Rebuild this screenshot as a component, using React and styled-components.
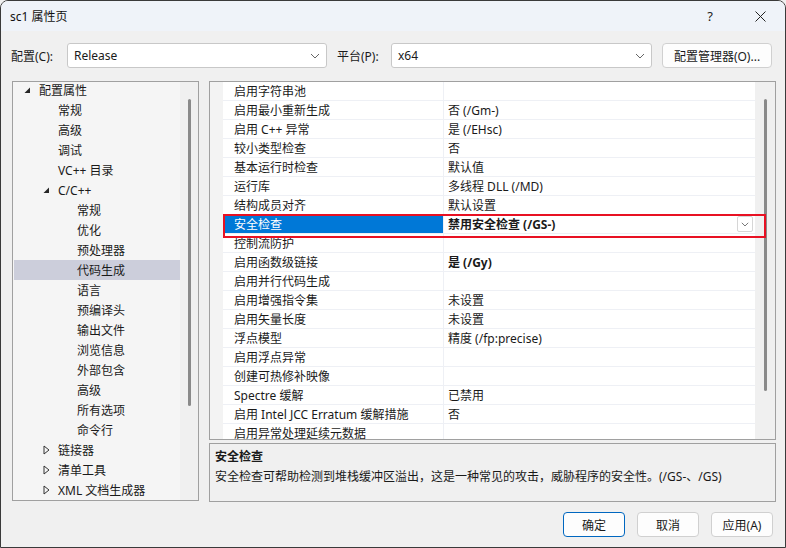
import React from "react";
import styled, { createGlobalStyle } from "styled-components";

const GlobalStyle = createGlobalStyle`
  html, body { margin: 0; padding: 0; background: #f0f0f0; }
  body {
    font-family: "Noto Sans", "Noto Sans CJK SC", sans-serif;
    font-size: 12px;
    color: #1a1a1a;
  }
  * { box-sizing: border-box; }
`;

const FONT = `"Noto Sans", "Noto Sans CJK SC", sans-serif`;

const Window = styled.div`
  width: 786px;
  height: 548px;
  display: flex;
  flex-direction: column;
  background: #f0f0f0;
  border: 1px solid #3a3a3a;
  border-radius: 8px 8px 0 0;
  overflow: hidden;
  font-family: ${FONT};
  font-size: 12px;
`;

const TitleBar = styled.div`
  height: 30px;
  flex: none;
  display: flex;
  align-items: center;
  background: #eff3f9;
  padding-left: 9px;
  font-size: 12px;
  color: #111;
`;

const Title = styled.div`
  flex: 1;
`;

const TitleButton = styled.div`
  width: 50px;
  height: 30px;
  display: flex;
  align-items: center;
  justify-content: center;
  color: #222;
  font-size: 13px;
`;

const TopRow = styled.div`
  display: flex;
  align-items: center;
  height: 27px;
  margin-top: 11px;
  padding-left: 10px;
`;

const Label = styled.span`
  width: ${(p) => p.w}px;
  flex: none;
  font-size: 12px;
`;

const Combo = styled.div`
  width: ${(p) => p.w}px;
  height: 25px;
  flex: none;
  display: flex;
  align-items: center;
  background: #fff;
  border: 1px solid #c8c8c8;
  border-radius: 3px;
  padding: 0 6px 0 6px;
  margin-right: 10px;
  font-size: 12px;
`;

const ComboText = styled.span`
  flex: 1;
`;

const Chevron = ({ size = 10, color = "#666" }) => (
  <svg width={size} height={size * 0.6} viewBox="0 0 10 6">
    <path d="M1 1 L5 5 L9 1" fill="none" stroke={color} strokeWidth="1" />
  </svg>
);

const Button = styled.div`
  width: ${(p) => p.w || 62}px;
  height: 25px;
  flex: none;
  display: flex;
  align-items: center;
  justify-content: center;
  background: #fdfdfd;
  border: 1px solid ${(p) => (p.primary ? "#0067c0" : "#d0d0d0")};
  border-radius: 4px;
  font-size: 12px;
  color: #1a1a1a;
`;

const Main = styled.div`
  display: flex;
  margin-top: 12px;
  padding-left: 11px;
  gap: 10px;
`;

const TreePanel = styled.div`
  width: 187px;
  height: 420px;
  border: 1px solid #a0a0a0;
  background: #f5f5f5;
  display: flex;
  position: relative;
`;

const TreeList = styled.div`
  flex: 1;
  padding-left: 1px;
  margin-top: -2px;
`;

const TreeRow = styled.div`
  height: 20px;
  display: flex;
  align-items: center;
  padding-left: ${(p) => 6 + p.level * 19}px;
  background: ${(p) => (p.selected ? "#cccedb" : "transparent")};
  font-size: 12px;
  color: #1a1a1a;
  white-space: nowrap;
`;

const Expander = styled.span`
  width: 19px;
  flex: none;
  display: flex;
  align-items: center;
  padding-left: 4px;
`;

const VScroll = styled.div`
  width: 18px;
  flex: none;
  display: flex;
  justify-content: center;
  padding-top: ${(p) => p.top}px;
  background: #f0f0f0;
`;

const Thumb = styled.div`
  width: 3px;
  height: ${(p) => p.h}px;
  background: #8a8a8a;
  border-radius: 2px;
`;

const RightCol = styled.div`
  display: flex;
  flex-direction: column;
  gap: 3px;
`;

const GridPanel = styled.div`
  width: 567px;
  height: 359px;
  border: 1px solid #a0a0a0;
  display: flex;
  overflow: hidden;
  position: relative;
`;

const Gutter = styled.div`
  width: 13px;
  flex: none;
  background: #f3f3f3;
`;

const Grid = styled.div`
  flex: 1;
  background: #fff;
  overflow: hidden;
`;

const GridRow = styled.div`
  height: 19px;
  display: flex;
  border-bottom: 1px solid #eef0f5;
  font-size: 12px;
`;

const NameCell = styled.div`
  width: 221px;
  flex: none;
  display: flex;
  align-items: center;
  padding-left: 11px;
  border-right: 1px solid #eef0f5;
  background: ${(p) => (p.selected ? "#0078d7" : "#fff")};
  color: ${(p) => (p.selected ? "#fff" : "#1a1a1a")};
  white-space: nowrap;
`;

const ValueCell = styled.div`
  flex: 1;
  display: flex;
  align-items: center;
  padding-left: 4px;
  font-weight: ${(p) => (p.bold ? 700 : 400)};
  white-space: nowrap;
`;

const ValueText = styled.span`
  flex: 1;
`;

const DropButton = styled.div`
  width: 16px;
  height: 16px;
  margin-right: 2px;
  display: flex;
  align-items: center;
  justify-content: center;
  border: 1px solid #d6d6d6;
  border-radius: 2px;
  background: #fff;
`;

const Highlight = styled.div`
  position: absolute;
  left: 13px;
  top: 132px;
  width: 543px;
  height: 24px;
  border: 2px solid #e81123;
  pointer-events: none;
`;

const GridScroll = styled.div`
  width: 20px;
  flex: none;
  background: #f0f0f0;
  display: flex;
  justify-content: center;
  padding-top: 17px;
`;

const DescPanel = styled.div`
  width: 567px;
  height: 59px;
  border: 1px solid #a0a0a0;
  padding: 3px 5px;
  display: flex;
  flex-direction: column;
  gap: 2px;
  font-size: 12px;
`;

const DescTitle = styled.div`
  font-weight: 700;
`;

const Footer = styled.div`
  display: flex;
  justify-content: flex-end;
  gap: 12px;
  margin-top: 10px;
  padding-right: 12px;
`;

const tree = [
  { t: "配置属性", level: 0, exp: "open" },
  { t: "常规", level: 1 },
  { t: "高级", level: 1 },
  { t: "调试", level: 1 },
  { t: "VC++ 目录", level: 1 },
  { t: "C/C++", level: 1, exp: "open" },
  { t: "常规", level: 2 },
  { t: "优化", level: 2 },
  { t: "预处理器", level: 2 },
  { t: "代码生成", level: 2, selected: true },
  { t: "语言", level: 2 },
  { t: "预编译头", level: 2 },
  { t: "输出文件", level: 2 },
  { t: "浏览信息", level: 2 },
  { t: "外部包含", level: 2 },
  { t: "高级", level: 2 },
  { t: "所有选项", level: 2 },
  { t: "命令行", level: 2 },
  { t: "链接器", level: 1, exp: "closed" },
  { t: "清单工具", level: 1, exp: "closed" },
  { t: "XML 文档生成器", level: 1, exp: "closed" },
];

const rows = [
  ["启用字符串池", ""],
  ["启用最小重新生成", "否 (/Gm-)"],
  ["启用 C++ 异常", "是 (/EHsc)"],
  ["较小类型检查", "否"],
  ["基本运行时检查", "默认值"],
  ["运行库", "多线程 DLL (/MD)"],
  ["结构成员对齐", "默认设置"],
  ["安全检查", "禁用安全检查 (/GS-)", "selected"],
  ["控制流防护", ""],
  ["启用函数级链接", "是 (/Gy)", "bold"],
  ["启用并行代码生成", ""],
  ["启用增强指令集", "未设置"],
  ["启用矢量长度", "未设置"],
  ["浮点模型", "精度 (/fp:precise)"],
  ["启用浮点异常", ""],
  ["创建可热修补映像", ""],
  ["Spectre 缓解", "已禁用"],
  ["启用 Intel JCC Erratum 缓解措施", "否"],
  ["启用异常处理延续元数据", ""],
];

const ExpIcon = ({ kind }) =>
  kind === "open" ? (
    <svg width="7" height="7" viewBox="0 0 7 7">
      <path d="M6 0.5 L6 6 L0.5 6 Z" fill="#262626" />
    </svg>
  ) : (
    <svg width="7" height="10" viewBox="0 0 7 10">
      <path d="M1 1 L6 5 L1 9 Z" fill="none" stroke="#333" strokeWidth="1" />
    </svg>
  );

export default function App() {
  return (
    <>
      <GlobalStyle />
      <Window>
        <TitleBar>
          <Title>sc1 属性页</Title>
          <TitleButton>?</TitleButton>
          <TitleButton>
            <svg width="11" height="11" viewBox="0 0 11 11">
              <path d="M0.5 0.5 L10.5 10.5 M10.5 0.5 L0.5 10.5" stroke="#222" strokeWidth="1" />
            </svg>
          </TitleButton>
        </TitleBar>

        <TopRow>
          <Label w={56}>配置(C):</Label>
          <Combo w={260}>
            <ComboText>Release</ComboText>
            <Chevron />
          </Combo>
          <Label w={54}>平台(P):</Label>
          <Combo w={261}>
            <ComboText>x64</ComboText>
            <Chevron />
          </Combo>
          <Button w={110}>配置管理器(O)...</Button>
        </TopRow>

        <Main>
          <TreePanel>
            <TreeList>
              {tree.map((n, i) => (
                <TreeRow key={i} level={n.level} selected={n.selected}>
                  <Expander>{n.exp && <ExpIcon kind={n.exp} />}</Expander>
                  {n.t}
                </TreeRow>
              ))}
            </TreeList>
            <VScroll top={17}>
              <Thumb h={307} />
            </VScroll>
          </TreePanel>

          <RightCol>
            <GridPanel>
              <Gutter />
              <Grid>
                {rows.map(([name, value, flag], i) => (
                  <GridRow key={i}>
                    <NameCell selected={flag === "selected"}>{name}</NameCell>
                    <ValueCell bold={flag === "selected" || flag === "bold"}>
                      <ValueText>{value}</ValueText>
                      {flag === "selected" && (
                        <DropButton>
                          <Chevron size={8} color="#555" />
                        </DropButton>
                      )}
                    </ValueCell>
                  </GridRow>
                ))}
              </Grid>
              <GridScroll>
                <Thumb h={292} />
              </GridScroll>
              <Highlight />
            </GridPanel>
            <DescPanel>
              <DescTitle>安全检查</DescTitle>
              <div>安全检查可帮助检测到堆栈缓冲区溢出，这是一种常见的攻击，威胁程序的安全性。(/GS-、/GS)</div>
            </DescPanel>
          </RightCol>
        </Main>

        <Footer>
          <Button primary>确定</Button>
          <Button>取消</Button>
          <Button>应用(A)</Button>
        </Footer>
      </Window>
    </>
  );
}
